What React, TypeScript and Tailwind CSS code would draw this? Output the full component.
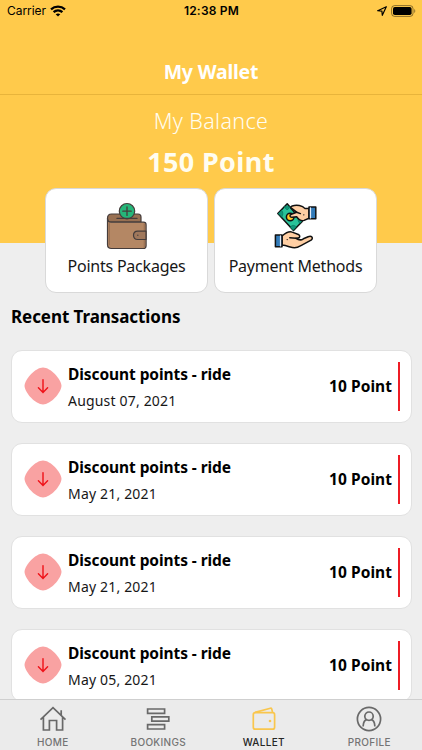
import type { ReactNode } from "react";

const transactions = [
  { title: "Discount points - ride", date: "August 07, 2021", amount: "10 Point" },
  { title: "Discount points - ride", date: "May 21, 2021", amount: "10 Point" },
  { title: "Discount points - ride", date: "May 21, 2021", amount: "10 Point" },
  { title: "Discount points - ride", date: "May 05, 2021", amount: "10 Point" },
];

function StatusBar() {
  return (
    <div className="grid h-[22px] grid-cols-3 items-center pr-[6px] pl-[7px] font-['Inter',sans-serif] text-[12px] text-black">
      <div className="flex items-center gap-[4px]">
        <span className="tracking-[-0.05px]">Carrier</span>
        <svg width="16" height="12" viewBox="0 0 16 12" fill="none" stroke="black" strokeWidth="2.3">
          <path d="M1 4.3C5 .6 11 .6 15 4.3" />
          <path d="M3.6 7.2C6.1 4.9 9.9 4.9 12.4 7.2" />
          <path d="M5.7 9.3C7 8.2 9 8.2 10.3 9.3L8 11.6Z" fill="black" stroke="none" />
        </svg>
      </div>
      <span className="text-center font-semibold tracking-[0.2px]">12:38 PM</span>
      <div className="flex items-center justify-end gap-[4px]">
        <svg width="10" height="10" viewBox="0 0 10 10" fill="none" stroke="black" strokeWidth="1.2" strokeLinejoin="round">
          <path d="M9.3.7.7 4.7 4.9 5.1 5.3 9.3Z" />
        </svg>
        <svg width="25" height="12" viewBox="0 0 25 12" fill="none">
          <rect x=".6" y=".6" width="21.4" height="10.8" rx="3" stroke="black" strokeOpacity=".45" />
          <rect x="2" y="2" width="18.6" height="8" rx="1.8" fill="black" />
          <path d="M23.3 4v4c1.3-.6 1.3-3.4 0-4Z" fill="black" fillOpacity=".5" />
        </svg>
      </div>
    </div>
  );
}

function PackagesIcon() {
  return (
    <svg width="44" height="50" viewBox="105 201 44 50" fill="none" stroke="#453c3b" strokeWidth="1.2" strokeLinecap="round" strokeLinejoin="round">
      <path d="M107.5 218.5c0-2.8 1.5-4.5 4-4.5H138c1.8 0 3 1.1 3 3v5H111c-2.2 0-3.5-1.3-3.5-3.5Z" fill="#987052" />
      <path d="M107.5 218.5c0 2.2 1.4 3.7 3.7 3.7H143.5c1.6 0 2.6 1 2.6 2.6v20.9c0 1.8-1 2.8-2.8 2.8H111.5c-2.5 0-4-1.5-4-4Z" fill="#b48764" />
      <path d="M109.4 223.5v21.1M144.3 223.8v23.4" stroke="#9b7254" />
      <path d="M146 231.2h-8.3c-2.5 0-4.2 1.5-4.2 4.1s1.7 4.2 4.2 4.2h8.3Z" fill="#a0785c" />
      <circle cx="137.8" cy="235.3" r=".8" fill="#54473f" stroke="none" />
      <circle cx="127" cy="211.2" r="7.7" fill="#25b679" />
      <path d="M122.8 211.2h8.4M127 207v8.4" strokeWidth="1.3" />
      <path d="M117 218.4h20" strokeWidth="1.3" />
    </svg>
  );
}

function PaymentIcon() {
  return (
    <svg width="46" height="50" viewBox="273 201 46 50" fill="none" stroke="#111" strokeWidth="1.5" strokeLinecap="round" strokeLinejoin="round">
      <path d="M287.2 203.8 277.8 213.5 293.5 230.5 302.2 221.5Z" fill="#28c39a" />
      <path d="m284.2 207 3 3 3-3ZM278.4 213.5l3.2-3.2c1.6 1.9 1.6 4.2.3 6.5ZM290.4 227.2c1.2-2.1 3.6-2.6 5.8-.3l-2.7 3ZM298.7 217.8c-1.2 2.1-.5 3.8 1.1 5.4l2-1.8Z" fill="#10977a" stroke="#087861" strokeWidth=".8" />
      <circle cx="290.2" cy="217" r="3.8" fill="#ffc928" />
      <path d="M309 208.4h-4.2c-2.2-2.9-8.2-3.8-12.6-2.4-1.6.6-1.7 1.4-.8 2.2l5.2 4-5.2 2c-2.2.7-1.8 3.2.8 3l4.4-.5c2.2 3.3 4.5 4.7 7.5 3.7l4.9-2.1Z" fill="#ffcfa4" />
      <path d="m296.6 212.2 3.8 1.4" />
      <path d="M309 207h6.8v11.8H309Z" fill="#327bb9" />
      <path d="M310.5 207.9v10" stroke="#e4ecf6" strokeWidth="1.2" />
      <circle cx="303.8" cy="214.8" r=".65" fill="#111" stroke="none" />
      <path d="M282 236c4.2-3.6 7.3-5.1 10.2-3.9l6.2 2.4c2 .9 1.7 3.4-.4 3.6l-2 .2c2.8 2 5.3 2 7.4.5l4.7-2c3.4-1.5 5.7 1.1 3 3.4l-8.8 4.6c-2.4 1.3-4.9 2.9-7.8 3-3.4 0-6.7-2-12.5-2.7Z" fill="#ffcfa4" />
      <path d="m289.8 237.8 6.2.5" />
      <path d="M275.4 235h6.6v11.8h-6.6Z" fill="#327bb9" />
      <path d="M280.5 235.9v10" stroke="#e4ecf6" strokeWidth="1.2" />
      <circle cx="287.2" cy="239.6" r=".65" fill="#111" stroke="none" />
    </svg>
  );
}

function ActionCard({ icon, children }: { icon: ReactNode; children: ReactNode }) {
  return (
    <button className="flex h-[105px] w-[163px] flex-col items-center rounded-[11px] border border-[#d9d9d9] bg-white pt-[12px]">
      {icon}
      <span className="mt-[4px] text-[16px] leading-[22px] tracking-[-0.22px] whitespace-nowrap text-[#171717]">{children}</span>
    </button>
  );
}

function TransactionRow({ title, date, amount }: { title: string; date: string; amount: string }) {
  return (
    <div className="flex h-[73px] shrink-0 items-center rounded-[11px] border border-[#e1e1e1] bg-white pr-[11px] pl-[12px] text-black">
      <svg className="mb-[2px] shrink-0" width="38" height="38" viewBox="0 0 38 38" fill="none">
        <path d="M.5 19C1 12 11.5.6 19 .6 26.5.6 37 12 37.5 19 37 26 26.5 37.4 19 37.4 11.5 37.4 1 26 .5 19Z" fill="#f9a2a2" />
        <path d="M19 12.6v12.8M14.4 20.8l4.6 4.6 4.6-4.6" stroke="#ef1118" strokeWidth="1.4" strokeLinecap="round" />
      </svg>
      <div className="ml-[6px] flex flex-1 flex-col gap-[5px] pt-px whitespace-nowrap">
        <p className="text-[15.5px] leading-[22px] font-bold tracking-[-0.08px]">{title}</p>
        <p className="text-[14px] leading-[22px] tracking-[0.18px] text-[#171717]">{date}</p>
      </div>
      <p className="text-[15.5px] font-bold tracking-[0.05px]">{amount}</p>
      <div className="ml-[6px] h-[49px] w-[2px] bg-[#ee1c25]" />
    </div>
  );
}

function HomeIcon() {
  return (
    <svg width="28" height="26" viewBox="0 0 28 26" fill="none" stroke="#696969" strokeWidth="1.7">
      <path d="M1.5 13.6 14 1.6 26.5 13.6M4.4 11v13h6v-9.5h7.2V24h6V11M22.2 9.3V4.2" />
    </svg>
  );
}

function BookingsIcon() {
  return (
    <svg width="24" height="26" viewBox="0 0 24 26" fill="none" stroke="#696969" strokeWidth="1.7">
      <path d="M1.6 3h17v4.4h-17ZM5.8 10.8h17v4.4h-17ZM1.6 18.6h17V23h-17Z" />
    </svg>
  );
}

function WalletIcon() {
  return (
    <svg width="24" height="26" viewBox="0 0 24 26" fill="none" stroke="#f9c64d" strokeWidth="1.7" strokeLinejoin="round">
      <rect x="1.3" y="6.7" width="21.3" height="16.5" rx="2" />
      <path d="M3 6.4 18.4 2.2c.7-.2 1.1.1 1.3.8l.9 3.4" />
      <circle cx="18" cy="15" r="1.3" fill="#f9c64d" stroke="none" />
    </svg>
  );
}

function ProfileIcon() {
  return (
    <svg width="26" height="26" viewBox="0 0 26 26" fill="none" stroke="#696969" strokeWidth="1.7">
      <circle cx="13" cy="13" r="11.6" />
      <circle cx="13" cy="10.2" r="4.2" />
      <path d="M7.2 19.8c.2-3.6 1.4-5.6 3.5-6.2M18.8 19.8c-.2-3.6-1.4-5.6-3.5-6.2" strokeLinecap="round" />
    </svg>
  );
}

const tabs = [
  { label: "HOME", icon: <HomeIcon />, active: false },
  { label: "BOOKINGS", icon: <BookingsIcon />, active: false },
  { label: "WALLET", icon: <WalletIcon />, active: true },
  { label: "PROFILE", icon: <ProfileIcon />, active: false },
];

export default function App() {
  return (
    <div className="flex h-[750px] w-[422px] flex-col overflow-hidden bg-[#eeeeee] font-['Noto_Sans',sans-serif]">
      <header className="h-[243px] shrink-0 bg-[#ffca4b] text-white">
        <StatusBar />
        <div className="flex h-[73px] items-center justify-center border-b border-[#e8b43b] pt-[27px]">
          <h1 className="text-[19.5px] leading-[26px] font-bold tracking-[-0.2px]">My Wallet</h1>
        </div>
        <div className="flex flex-col items-center pt-[10px] text-[#fffdf0]">
          <p className="text-[21.5px] leading-[32px] font-light tracking-[0.35px]">My Balance</p>
          <p className="mt-[6px] text-[27px] leading-[38px] font-bold tracking-[0.35px]">150 Point</p>
        </div>
      </header>

      {/* Cards straddle the header edge */}
      <div className="relative -mt-[55px] flex shrink-0 justify-center gap-[6px]">
        <ActionCard icon={<PackagesIcon />}>Points Packages</ActionCard>
        <ActionCard icon={<PaymentIcon />}>Payment Methods</ActionCard>
      </div>

      <main className="flex min-h-0 flex-1 flex-col overflow-hidden pr-[10px] pl-[11px]">
        <h2 className="mt-[12px] text-[17px] leading-[24px] font-bold tracking-[-0.07px] text-black">Recent Transactions</h2>
        <div className="mt-[21px] flex flex-col gap-[20px]">
          {transactions.map((t, i) => (
            <TransactionRow key={i} {...t} />
          ))}
        </div>
      </main>

      <nav className="grid h-[51px] shrink-0 grid-cols-4 border-t border-[#cfcfcf] bg-[#ebebeb] font-['Inter',sans-serif]">
        {tabs.map((tab) => (
          <div key={tab.label} className="flex flex-col items-center pt-[6px]">
            {tab.icon}
            <span className={tab.active ? "mt-[4px] text-[10px] leading-[13px] font-medium tracking-[0.3px] text-[#262626]" : "mt-[4px] text-[10px] leading-[13px] font-medium tracking-[0.3px] text-[#747474]"}>
              {tab.label}
            </span>
          </div>
        ))}
      </nav>
    </div>
  );
}
